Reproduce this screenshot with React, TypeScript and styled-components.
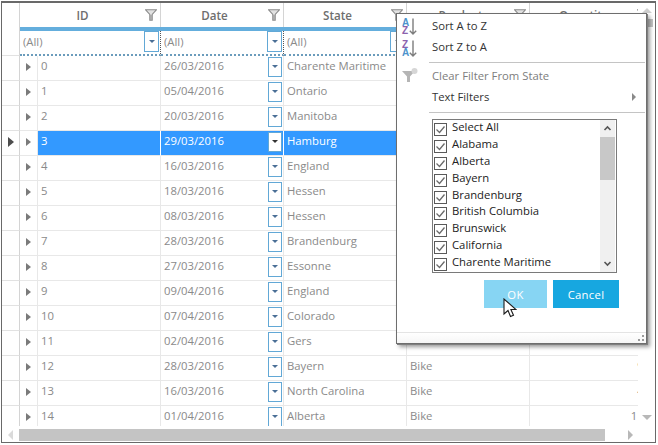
import { type JSX } from 'react'
import styled, { createGlobalStyle } from 'styled-components'

/* ----------------------
   Data
---------------------- */

type Row = { id: number; date: string; state: string; product: string; quantity: string }

const rows: Row[] = [
  { id: 0, date: '26/03/2016', state: 'Charente Maritime', product: 'Car', quantity: '2310' },
  { id: 1, date: '05/04/2016', state: 'Ontario', product: 'Car', quantity: '1450' },
  { id: 2, date: '20/03/2016', state: 'Manitoba', product: 'Car', quantity: '1200' },
  { id: 3, date: '29/03/2016', state: 'Hamburg', product: 'Car', quantity: '1725' },
  { id: 4, date: '16/03/2016', state: 'England', product: 'Car', quantity: '1513' },
  { id: 5, date: '18/03/2016', state: 'Hessen', product: 'Car', quantity: '1104' },
  { id: 6, date: '08/03/2016', state: 'Hessen', product: 'Car', quantity: '1890' },
  { id: 7, date: '28/03/2016', state: 'Brandenburg', product: 'Car', quantity: '1321' },
  { id: 8, date: '27/03/2016', state: 'Essonne', product: 'Car', quantity: '1642' },
  { id: 9, date: '09/04/2016', state: 'England', product: 'Car', quantity: '1077' },
  { id: 10, date: '07/04/2016', state: 'Colorado', product: 'Car', quantity: '1238' },
  { id: 11, date: '02/04/2016', state: 'Gers', product: 'Car', quantity: '1556' },
  { id: 12, date: '28/03/2016', state: 'Bayern', product: 'Bike', quantity: '9176' },
  { id: 13, date: '16/03/2016', state: 'North Carolina', product: 'Bike', quantity: '4380' },
  { id: 14, date: '01/04/2016', state: 'Alberta', product: 'Bike', quantity: '11784' },
]

const filterItems = [
  'Select All',
  'Alabama',
  'Alberta',
  'Bayern',
  'Brandenburg',
  'British Columbia',
  'Brunswick',
  'California',
  'Charente Maritime',
]

const columns = '18px 18px 123px 123px 123px 123px 135px'

/* ----------------------
   Styled Components
---------------------- */

const GlobalStyle = createGlobalStyle`
  html, body {
    margin: 0;
    padding: 0;
    background: #ffffff;
  }
  body {
    font-family: 'Open Sans', 'Liberation Sans', sans-serif;
    font-size: 11.3px;
  }
  * {
    box-sizing: border-box;
  }
`

const Page = styled.div`
  width: 658px;
  height: 445px;
  padding: 1px 0 0 1px;
  position: relative;
  overflow: hidden;
`

const Frame = styled.div`
  width: 655px;
  height: 442px;
  border: 1px solid #696969;
  border-top-width: 2px;
  display: flex;
  flex-direction: column;
`

const TopArea = styled.div`
  display: flex;
  height: 423px;
`

const GridViewport = styled.div`
  width: 636px;
  height: 423px;
  overflow: hidden;
`

const GridRow = styled.div`
  display: grid;
  grid-template-columns: ${columns};
  width: 543px;
`

const HeaderRow = styled(GridRow)`
  height: 24px;
`

const HeaderCorner = styled.div`
  border-right: 1px solid #d4d4d4;
`

const HeaderCell = styled.div<{ $span?: number; $trail?: number }>`
  grid-column: span ${({ $span }) => $span ?? 1};
  display: flex;
  align-items: center;
  padding-right: ${({ $trail }) => $trail ?? 3}px;
  border-right: 1px solid #d4d4d4;
`

const HeaderLabel = styled.span`
  flex: 1;
  text-align: center;
  font-weight: 600;
  font-size: 11.6px;
  color: #6e6e6e;
`

const FunnelIcon = styled.svg`
  width: 12px;
  height: 12px;
  flex-shrink: 0;
`

const StripRow = styled(GridRow)`
  height: 4px;
`

const StripBlank = styled.div`
  border-right: 1px solid #d4d4d4;
`

const StripFill = styled.div`
  grid-column: span 6;
  height: 4px;
  background: #64aedd;
`

const FilterRow = styled(GridRow)`
  height: 25px;
`

const FilterCorner = styled.div`
  border-right: 1px solid #d4d4d4;
  border-bottom: 1px solid #e2e2e2;
`

const FilterCell = styled.div<{ $span?: number }>`
  grid-column: span ${({ $span }) => $span ?? 1};
  display: flex;
  align-items: center;
  justify-content: space-between;
  padding: 0 1px 2px 3px;
  border-right: 1px dotted #555555;
  border-bottom: 2px dotted #6b9cbc;
  color: #8a8a8a;
`

const DropButton = styled.div<{ $inverted?: boolean; $inRow?: boolean }>`
  width: ${({ $inRow }) => ($inRow ? 14 : 15)}px;
  height: ${({ $inRow }) => ($inRow ? 20 : 21)}px;
  margin-top: ${({ $inRow }) => ($inRow ? 2 : 0)}px;
  flex-shrink: 0;
  display: flex;
  align-items: center;
  justify-content: center;
  border: 1px solid #62a8d6;
  background: #ffffff;

  &::after {
    content: '';
    border-left: 3px solid transparent;
    border-right: 3px solid transparent;
    border-top: 3px solid ${({ $inverted }) => ($inverted ? '#333333' : '#4a6f96')};
  }
`

const DataRow = styled(GridRow)<{ $selected: boolean }>`
  height: 25px;
  color: ${({ $selected }) => ($selected ? '#ffffff' : '#8a8a8a')};
`

const RowHeader = styled.div`
  display: flex;
  align-items: center;
  padding: 0 0 2px 6px;
  border-right: 1px solid #d4d4d4;
  border-bottom: 1px solid #e2e2e2;
`

const Expander = styled.div`
  display: flex;
  align-items: center;
  padding: 0 0 2px 6px;
  border-right: 1px solid #e8e8e8;
  border-bottom: 1px solid #e8e8e8;
`

const Triangle = styled.span<{ $big?: boolean }>`
  width: 0;
  height: 0;
  border-top: ${({ $big }) => ($big ? 5 : 4)}px solid transparent;
  border-bottom: ${({ $big }) => ($big ? 5 : 4)}px solid transparent;
  border-left: ${({ $big }) => ($big ? 6 : 5)}px solid ${({ $big }) => ($big ? '#4d4d4d' : '#7a7a7a')};
`

const Cell = styled.div<{ $selected: boolean; $right?: boolean }>`
  display: flex;
  align-items: center;
  justify-content: ${({ $right }) => ($right ? 'flex-end' : 'space-between')};
  padding: 0 1px 5px 3px;
  white-space: nowrap;
  overflow: hidden;
  background: ${({ $selected }) => ($selected ? '#3399ff' : 'transparent')};
  border-right: 1px solid ${({ $selected }) => ($selected ? '#ffffff' : '#e8e8e8')};
  border-bottom: 1px solid #e8e8e8;
`

const VerticalScroll = styled.div`
  width: 17px;
  display: flex;
  flex-direction: column;
  align-items: center;
  padding: 5px 0 6px;
`

const VThumb = styled.div`
  width: 12px;
  height: 8px;
  margin-top: 6px;
  background: #c4c4c4;
`

const ScrollSpacer = styled.div`
  flex: 1;
`

const ArrowUp = styled.span`
  border-left: 5px solid transparent;
  border-right: 5px solid transparent;
  border-bottom: 5px solid #cfcfcf;
`

const ArrowDown = styled.span`
  border-left: 5px solid transparent;
  border-right: 5px solid transparent;
  border-top: 5px solid #b8b8b8;
`

const HorizontalScroll = styled.div`
  margin-top: 3px;
  height: 12px;
  display: flex;
  align-items: center;
  padding-left: 6px;
`

const ArrowLeft = styled.span`
  width: 0;
  border-top: 5px solid transparent;
  border-bottom: 5px solid transparent;
  border-right: 5px solid #dadada;
`

const ArrowRight = styled.span`
  border-top: 5px solid transparent;
  border-bottom: 5px solid transparent;
  border-left: 5px solid #b8b8b8;
  margin-left: 23px;
`

const HThumb = styled.div`
  width: 586px;
  height: 12px;
  margin-left: 6px;
  background: #c4c4c4;
`

/* popup */

const Popup = styled.div`
  position: absolute;
  left: 396px;
  top: 13px;
  width: 251px;
  height: 331px;
  background: #ffffff;
  border: 1px solid #6e6e6e;
  box-shadow: 1px 1px 0 #808080, 3px 3px 4px rgba(0, 0, 0, 0.4);
  display: flex;
  flex-direction: column;
  padding: 1px 0 0 32px;
`

const MenuItem = styled.div<{ $muted?: boolean }>`
  position: relative;
  height: 21px;
  display: flex;
  align-items: center;
  justify-content: space-between;
  padding: 0 10px 0 3px;
  color: ${({ $muted }) => ($muted ? '#7d7d7d' : '#333333')};
`

const MenuIcon = styled.svg<{ $offset?: number }>`
  position: absolute;
  left: -29px;
  top: ${({ $offset }) => $offset ?? 0}px;
  width: 24px;
  height: 22px;
`

const AlphaLetter = styled.text<{ $tone: 'blue' | 'purple' }>`
  font-family: 'Liberation Sans', sans-serif;
  font-weight: 700;
  font-size: 10px;
  fill: ${({ $tone }) => ($tone === 'blue' ? '#4d93cc' : '#8c62ad')};
`

const SubmenuArrow = styled.span`
  border-top: 4px solid transparent;
  border-bottom: 4px solid transparent;
  border-left: 4px solid #8a8a8a;
`

const Separator = styled.div`
  height: 1px;
  margin: 5px 1px 2px 0;
  background: #c4c4c4;
`

const ListBox = styled.div`
  margin: 4px 0 0 3px;
  width: 185px;
  height: 154px;
  border: 1px solid #7a7a7a;
  display: flex;
`

const ListItems = styled.div`
  flex: 1;
  display: flex;
  flex-direction: column;
  padding-left: 1px;
`

const ListItem = styled.div`
  height: 17px;
  display: flex;
  align-items: flex-start;
  gap: 5px;
  line-height: 14px;
  color: #222222;
`

const CheckBox = styled.svg`
  width: 13px;
  height: 13px;
  margin-top: 3px;
  flex-shrink: 0;
`

const ListScroll = styled.div`
  width: 15px;
  margin-right: 1px;
  background: #f0f0f0;
  display: flex;
  flex-direction: column;
  align-items: center;
`

const ListArrowSlot = styled.svg`
  width: 15px;
  height: 17px;
  flex-shrink: 0;
`

const ListThumb = styled.div`
  width: 15px;
  height: 43px;
  background: #c8c8c8;
`

const ButtonRow = styled.div`
  display: flex;
  gap: 6px;
  margin: 7px 0 0 55px;
`

const DialogButton = styled.div<{ $faded?: boolean }>`
  height: 28px;
  width: ${({ $faded }) => ($faded ? 63 : 66)}px;
  display: flex;
  align-items: center;
  justify-content: center;
  letter-spacing: 0.3px;
  color: #ffffff;
  background: ${({ $faded }) => ($faded ? '#87d5f3' : '#17a7e0')};
`

const Footer = styled.div`
  position: absolute;
  left: 0;
  right: 0;
  bottom: 0;
  height: 11px;
  border-top: 1px solid #e4e4e4;
  background: linear-gradient(#ffffff, #f6f6f6);
`

const Grip = styled.svg`
  position: absolute;
  right: 1px;
  bottom: 1px;
  width: 8px;
  height: 8px;
`

const Cursor = styled.svg`
  position: absolute;
  left: 503px;
  top: 298px;
  width: 14px;
  height: 20px;
`

/* ----------------------
   Small drawings
---------------------- */

const Funnel = (): JSX.Element => (
  <FunnelIcon viewBox='0 0 12 12'>
    <path d='M0.6 0.8h10.8L7.2 5.4v5.8H4.8V5.4z' fill='#e2e2e2' stroke='#8a8a8a' strokeWidth='1.1' />
    <path d='M5.4 6h1.2v5H5.4z' fill='#9a9a9a' />
  </FunnelIcon>
)

const Check = (): JSX.Element => (
  <CheckBox viewBox='0 0 13 13'>
    <rect x='0.5' y='0.5' width='12' height='12' fill='#ffffff' stroke='#5a5a5a' />
    <path d='M2.5 6.5l3 3 5-6' fill='none' stroke='#6a6a6a' strokeWidth='1.3' />
  </CheckBox>
)

type LetterTone = 'blue' | 'purple'

type SortIconProps = {
  top: [string, LetterTone]
  bottom: [string, LetterTone]
  offset: number
}

const SortIcon = ({ top, bottom, offset }: SortIconProps): JSX.Element => (
  <MenuIcon viewBox='0 0 24 22' $offset={offset}>
    <AlphaLetter x='2' y='9.5' $tone={top[1]}>{top[0]}</AlphaLetter>
    <AlphaLetter x='2' y='18' $tone={bottom[1]}>{bottom[0]}</AlphaLetter>
    <path d='M13 2.5v15.5M9.8 14.8l3.2 3.2 3.2-3.2' fill='none' stroke='#7d7d7d' strokeWidth='1.4' />
  </MenuIcon>
)

/* ----------------------
   Component
---------------------- */

const App = (): JSX.Element => {
  return (
    <Page>
      <GlobalStyle />
      <Frame>
        <TopArea>
          <GridViewport>
            <HeaderRow>
              <HeaderCorner />
              <HeaderCell $span={2}><HeaderLabel>ID</HeaderLabel><Funnel /></HeaderCell>
              <HeaderCell><HeaderLabel>Date</HeaderLabel><Funnel /></HeaderCell>
              <HeaderCell><HeaderLabel>State</HeaderLabel><Funnel /></HeaderCell>
              <HeaderCell><HeaderLabel>Product</HeaderLabel><Funnel /></HeaderCell>
              <HeaderCell $trail={15}><HeaderLabel>Quantity</HeaderLabel><Funnel /></HeaderCell>
            </HeaderRow>
            <StripRow>
              <StripBlank />
              <StripFill />
            </StripRow>
            <FilterRow>
              <FilterCorner />
              <FilterCell $span={2}>(All)<DropButton /></FilterCell>
              <FilterCell>(All)<DropButton /></FilterCell>
              <FilterCell>(All)<DropButton /></FilterCell>
              <FilterCell>(All)<DropButton /></FilterCell>
              <FilterCell>(All)<DropButton /></FilterCell>
            </FilterRow>
            {rows.map((row) => {
              const selected = row.id === 3
              return (
                <DataRow key={row.id} $selected={selected}>
                  <RowHeader>{selected && <Triangle $big />}</RowHeader>
                  <Expander><Triangle /></Expander>
                  <Cell $selected={selected}>{row.id}</Cell>
                  <Cell $selected={selected}>
                    {row.date}
                    <DropButton $inRow $inverted={selected} />
                  </Cell>
                  <Cell $selected={selected}>{row.state}</Cell>
                  <Cell $selected={selected}>{row.product}</Cell>
                  <Cell $selected={selected} $right>{row.quantity}</Cell>
                </DataRow>
              )
            })}
          </GridViewport>
          <VerticalScroll>
            <ArrowUp />
            <VThumb />
            <ScrollSpacer />
            <ArrowDown />
          </VerticalScroll>
        </TopArea>
        <HorizontalScroll>
          <ArrowLeft />
          <HThumb />
          <ArrowRight />
        </HorizontalScroll>
      </Frame>

      <Popup>
        <MenuItem>
          <SortIcon top={['A', 'blue']} bottom={['Z', 'purple']} offset={1} />
          Sort A to Z
        </MenuItem>
        <MenuItem>
          <SortIcon top={['Z', 'purple']} bottom={['A', 'blue']} offset={2} />
          Sort Z to A
        </MenuItem>
        <Separator />
        <MenuItem $muted>
          <MenuIcon viewBox='0 0 24 22'>
            <path d='M2 6h13l-5 5.5V17H7v-5.5z' fill='#b5b5b5' />
            <circle cx='14.5' cy='6' r='3' fill='#d6d6d6' />
          </MenuIcon>
          Clear Filter From State
        </MenuItem>
        <MenuItem>
          Text Filters
          <SubmenuArrow />
        </MenuItem>
        <Separator />
        <ListBox>
          <ListItems>
            {filterItems.map((item) => (
              <ListItem key={item}>
                <Check />
                {item}
              </ListItem>
            ))}
          </ListItems>
          <ListScroll>
            <ListArrowSlot viewBox='0 0 15 17'>
              <path d='M4.5 10l3-3 3 3' fill='none' stroke='#555555' strokeWidth='1.6' />
            </ListArrowSlot>
            <ListThumb />
            <ScrollSpacer />
            <ListArrowSlot viewBox='0 0 15 17'>
              <path d='M4.5 7l3 3 3-3' fill='none' stroke='#555555' strokeWidth='1.6' />
            </ListArrowSlot>
          </ListScroll>
        </ListBox>
        <ButtonRow>
          <DialogButton $faded>OK</DialogButton>
          <DialogButton>Cancel</DialogButton>
        </ButtonRow>
        <Footer>
          <Grip viewBox='0 0 8 8'>
            <path d='M5 1h2v2H5zM1 5h2v2H1zM5 5h2v2H5z' fill='#9a9a9a' />
          </Grip>
        </Footer>
      </Popup>

      <Cursor viewBox='0 0 14 20'>
        <path d='M1 1v15l4-3.5 2.5 6 3-1.2-2.6-5.8H13z' fill='#ffffff' stroke='#1c1c1c' strokeWidth='1.1' />
      </Cursor>
    </Page>
  )
}

export default App
